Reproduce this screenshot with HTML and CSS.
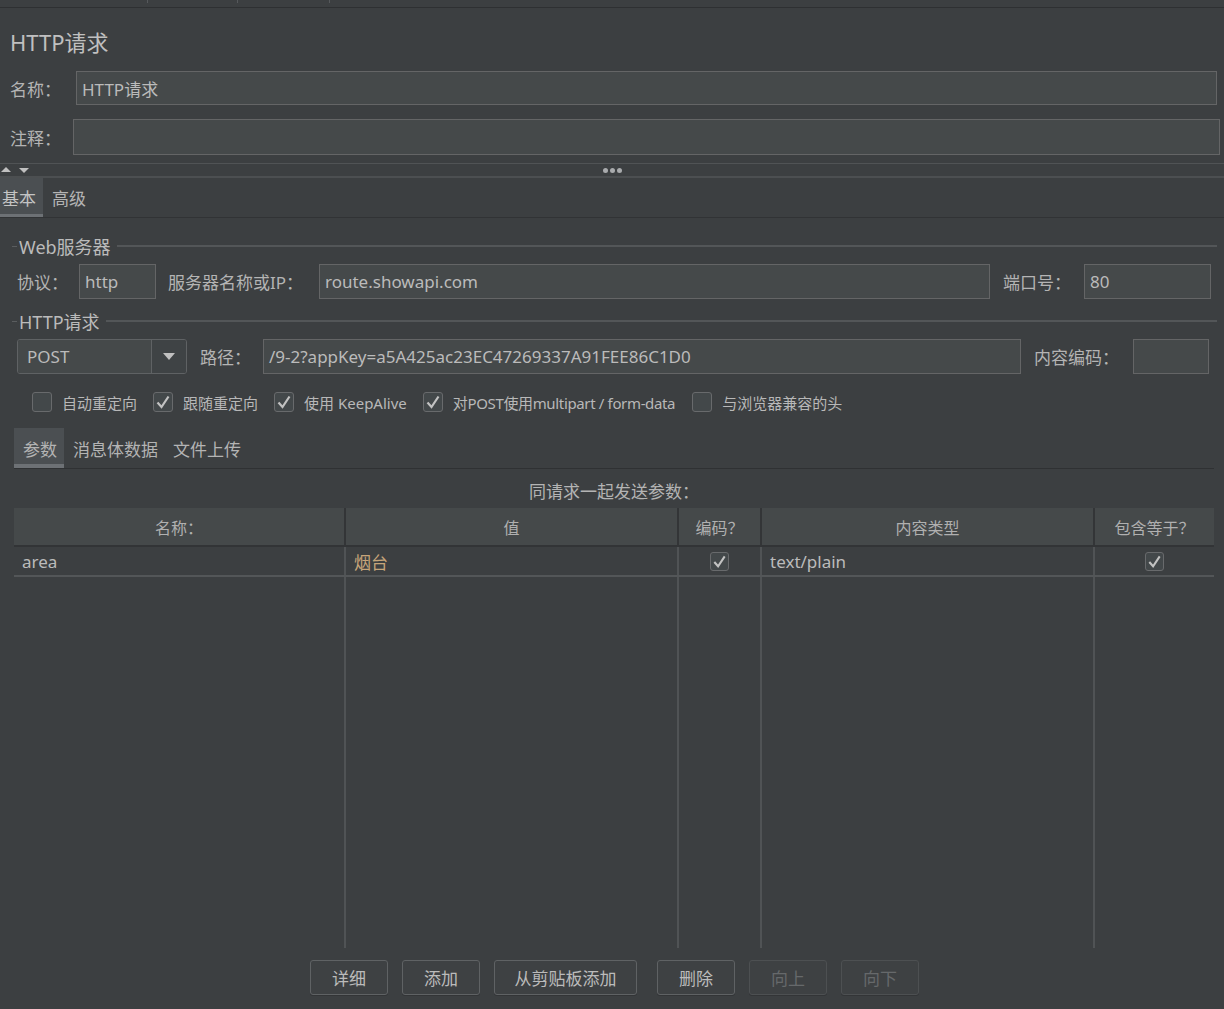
FILE: index.html
```html
<!DOCTYPE html>
<html lang="zh-CN">
<head>
<meta charset="utf-8">
<title>HTTP请求</title>
<link rel="stylesheet" href="styles.css">
</head>
<body>
<div class="topbar"><span class="seg s1"></span><span class="seg s2"></span><span class="seg s3"></span></div>
<div class="title">HTTP请求</div>
<div class="row name-row"><span class="lbl lbl-name">名称：</span><div class="input">HTTP请求</div></div>
<div class="row comment-row"><span class="lbl lbl-comment">注释：</span><div class="input"></div></div>
<div class="splitter">
  <div class="arrows">
    <svg width="30" height="10" viewBox="0 0 30 10"><polygon points="1,7 6,2 11,7" fill="#c0c0c0"/><polygon points="19,3 29,3 24,8" fill="#c0c0c0"/></svg>
  </div>
  <div class="dots"><i></i><i></i><i></i></div>
  <div></div>
</div>
<div class="tabbar">
  <div class="tab active">基本</div>
  <div class="tab">高级</div>
</div>
<div class="content">
  <div class="legend"><span>Web服务器</span></div>
  <div class="frow r1">
    <span class="lbl l-proto">协议：</span>
    <div class="input i-proto">http</div>
    <span class="lbl l-server">服务器名称或IP：</span>
    <div class="input grow">route.showapi.com</div>
    <span class="lbl l-port">端口号：</span>
    <div class="input i-port">80</div>
  </div>
  <div class="legend lg2"><span>HTTP请求</span></div>
  <div class="frow r2">
    <div class="combo"><span class="combo-text">POST</span><span class="combo-btn"><svg width="12" height="7" viewBox="0 0 12 7"><polygon points="0,0 12,0 6,7" fill="#c0c0c0"/></svg></span></div>
    <span class="lbl l-path">路径：</span>
    <div class="input grow">/9-2?appKey=a5A425ac23EC47269337A91FEE86C1D0</div>
    <span class="lbl l-enc">内容编码：</span>
    <div class="input i-enc"></div>
  </div>
  <div class="checks">
    <span class="cb"></span><span class="cbl">自动重定向</span>
    <span class="cb on"><svg width="18" height="18" viewBox="0 0 18 18"><polyline points="3.5,9.5 7.5,14 14.5,3.5" fill="none" stroke="#c2c2c2" stroke-width="2.2"/></svg></span><span class="cbl">跟随重定向</span>
    <span class="cb on"><svg width="18" height="18" viewBox="0 0 18 18"><polyline points="3.5,9.5 7.5,14 14.5,3.5" fill="none" stroke="#c2c2c2" stroke-width="2.2"/></svg></span><span class="cbl">使用 KeepAlive</span>
    <span class="cb on"><svg width="18" height="18" viewBox="0 0 18 18"><polyline points="3.5,9.5 7.5,14 14.5,3.5" fill="none" stroke="#c2c2c2" stroke-width="2.2"/></svg></span><span class="cbl tight">对POST使用multipart / form-data</span>
    <span class="cb"></span><span class="cbl">与浏览器兼容的头</span>
  </div>
  <div class="subtabs">
    <div class="stab active">参数</div>
    <div class="stab">消息体数据</div>
    <div class="stab">文件上传</div>
  </div>
  <div class="caption">同请求一起发送参数：</div>
  <div class="table">
    <div class="trow thead">
      <div class="cell">名称：</div>
      <div class="cell">值</div>
      <div class="cell">编码？</div>
      <div class="cell">内容类型</div>
      <div class="cell">包含等于？</div>
    </div>
    <div class="trow tbody">
      <div class="cell left">area</div>
      <div class="cell left val">烟台</div>
      <div class="cell"><span class="cb small on"><svg width="17" height="17" viewBox="0 0 18 18"><polyline points="3.5,9.5 7.5,14 14.5,3.5" fill="none" stroke="#c2c2c2" stroke-width="2.2"/></svg></span></div>
      <div class="cell left">text/plain</div>
      <div class="cell"><span class="cb small on"><svg width="17" height="17" viewBox="0 0 18 18"><polyline points="3.5,9.5 7.5,14 14.5,3.5" fill="none" stroke="#c2c2c2" stroke-width="2.2"/></svg></span></div>
    </div>
    <div class="trow tfill">
      <div class="cell"></div><div class="cell"></div><div class="cell"></div><div class="cell"></div><div class="cell"></div>
    </div>
  </div>
  <div class="buttons">
    <button class="btn">详细</button>
    <button class="btn">添加</button>
    <button class="btn wide">从剪贴板添加</button>
    <button class="btn del">删除</button>
    <button class="btn dis">向上</button>
    <button class="btn dis">向下</button>
  </div>
</div>
</body>
</html>
```
FILE: styles.css
```css
* { box-sizing: border-box; }
html, body { margin: 0; padding: 0; }
body {
  background: #3c3f41;
  color: #bbbbbb;
  font-family: "Noto Sans", "Noto Sans CJK SC", sans-serif;
  font-size: 17px;
  width: 1224px;
  height: 1009px;
  overflow: hidden;
}
.topbar {
  height: 8px;
  border-bottom: 1px solid #2e3032;
  display: flex;
  align-items: flex-start;
}
.seg { height: 3px; border-right: 1px solid #56595c; }
.s1 { width: 148px; }
.s2 { width: 90px; }
.s3 { width: 92px; }

.title {
  padding: 21px 10px 16px;
  line-height: 26px;
  font-size: 22px;
  color: #c0c0c0;
}
.row { display: flex; align-items: stretch; }
.name-row { height: 34px; }
.comment-row { height: 36px; margin-top: 14px; }
.lbl {
  display: flex;
  align-items: center;
  white-space: nowrap;
  font-size: 17px;
  color: #b4b4b4;
}
.lbl-name { width: 76px; padding-left: 10px; }
.lbl-comment { width: 73px; padding-left: 10px; }
.input {
  background: #45494a;
  border: 1px solid #646566;
  display: flex;
  align-items: center;
  padding: 0 5px;
  font-size: 17px;
  color: #bbbbbb;
  white-space: nowrap;
  overflow: hidden;
}
.name-row .input { flex: 1; margin-right: 7px; }
.comment-row .input { flex: 1; margin-right: 4px; }

.splitter {
  margin-top: 8px;
  height: 15px;
  border-top: 1px solid #505355;
  border-bottom: 2px solid #4c4f51;
  display: grid;
  grid-template-columns: 1fr auto 1fr;
  align-items: center;
}
.arrows { display: flex; align-items: center; height: 12px; }
.arrows svg { display: block; }
.dots { display: flex; gap: 2px; }
.dots i { width: 5px; height: 5px; border-radius: 50%; background: #a9abad; display: block; }

.tabbar {
  display: flex;
  height: 40px;
  border-bottom: 1px solid #313335;
}
.tab {
  height: 39px;
  display: flex;
  align-items: center;
  padding: 0 7px 0 2px;
  font-size: 17px;
  color: #b4b4b4;
}
.tab + .tab { margin-left: 7px; }
.tab.active {
  background: #4b4f52;
  box-shadow: inset 0 -3px 0 #6d7175;
  color: #c4c4c4;
}

.content { padding: 0 7px 0 12px; }
.legend {
  margin-top: 16px;
  height: 24px;
  display: flex;
  align-items: center;
  font-size: 18px;
  color: #bbbbbb;
}
.legend::before {
  content: "";
  width: 5px;
  border-top: 1px solid #5a5d5f;
  margin-right: 2px;
}
.legend::after {
  content: "";
  flex: 1;
  border-top: 2px solid #535658;
  margin-left: 6px;
}
.legend.lg2 { margin-top: 10px; }

.frow { display: flex; height: 35px; margin-top: 6px; }
.r1 { padding: 0 6px 0 5px; }
.r2 { padding: 0 8px 0 5px; }
.grow { flex: 1; }
.l-proto { width: 62px; }
.i-proto { width: 77px; }
.l-server { width: 151px; margin-left: 12px; }
.l-port { width: 81px; margin-left: 13px; }
.i-port { width: 127px; }
.l-path { width: 63px; margin-left: 13px; }
.l-enc { width: 99px; margin-left: 13px; }
.i-enc { width: 76px; }

.combo {
  width: 170px;
  display: flex;
  border: 1px solid #5f6264;
  border-radius: 3px;
  overflow: hidden;
}
.combo-text {
  flex: 1;
  background: #45494a;
  display: flex;
  align-items: center;
  padding-left: 9px;
  font-size: 17px;
}
.combo-btn {
  width: 35px;
  border-left: 1px solid #5f6264;
  background: #3f4345;
  display: flex;
  align-items: center;
  justify-content: center;
}
.combo-btn svg { display: block; }

.checks {
  display: flex;
  align-items: center;
  height: 24px;
  margin-top: 16px;
  padding-left: 20px;
  font-size: 15px;
}
.cb {
  width: 20px;
  height: 20px;
  border: 1px solid #686a6c;
  border-radius: 3px;
  background: #43484a;
  display: inline-flex;
  align-items: center;
  justify-content: center;
  flex: none;
}
.cb svg { display: block; }
.cb.small { width: 19px; height: 19px; }
.cbl { margin: 0 16px 0 10px; white-space: nowrap; color: #b8b8b8; }
.cbl.tight { letter-spacing: -0.35px; margin-right: 17px; }

.subtabs {
  display: flex;
  margin: 14px 3px 0 2px;
  height: 41px;
  border-bottom: 1px solid #2f3133;
}
.stab {
  height: 40px;
  display: flex;
  align-items: center;
  padding: 0 6px 0 9px;
  font-size: 17px;
  color: #b4b4b4;
}
.stab.active {
  background: #4b4f52;
  box-shadow: inset 0 -4px 0 #6d7175;
  padding-right: 7px;
}

.caption {
  margin: 0 3px 0 2px;
  height: 39px;
  display: flex;
  align-items: center;
  justify-content: center;
  padding-top: 3px;
  font-size: 17px;
  color: #b4b4b4;
}

.table { margin: 0 3px 0 2px; }
.trow {
  display: grid;
  grid-template-columns: 332px 333px 83px 333px 119px;
}
.cell {
  border-right: 2px solid #505355;
  display: flex;
  align-items: center;
  justify-content: center;
  white-space: nowrap;
}
.cell:last-child { border-right: none; }
.thead { height: 39px; background: #45494a; border-bottom: 2px solid #323436; }
.thead .cell { border-right-color: #333537; font-size: 16px; color: #b0b0b0; }
.tbody { height: 30px; border-bottom: 2px solid #535658; }
.tbody .cell { font-size: 17px; }
.cell.left { justify-content: flex-start; padding-left: 8px; }
.cell.val { color: #c6a57a; }
.tfill { height: 371px; }

.buttons {
  display: flex;
  justify-content: center;
  gap: 14px;
  margin-top: 12px;
}
.btn {
  width: 78px;
  height: 35px;
  padding: 0;
  border: 1px solid #5f6264;
  border-radius: 3px;
  background: #3e4143;
  color: #bbbbbb;
  font-family: "Noto Sans CJK SC", sans-serif;
  font-size: 17px;
  line-height: 1;
  box-shadow: 0 1px 0 #333537;
}
.btn.wide { width: 143px; }
.btn.del { margin-left: 6px; }
.btn.dis { color: #66696b; border-color: #4d5052; }
```
